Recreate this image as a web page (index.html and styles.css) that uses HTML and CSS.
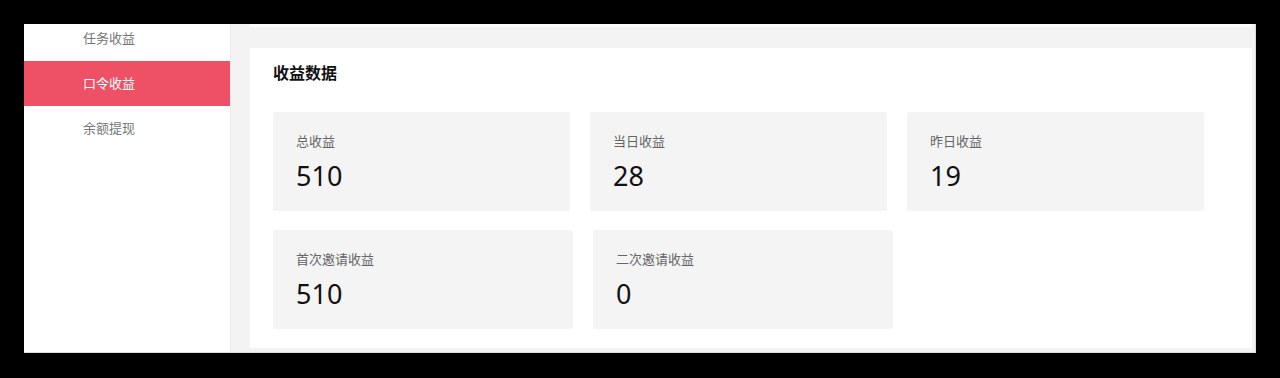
FILE: index.html
```html
<!DOCTYPE html>
<html lang="zh-CN">
<head>
  <meta charset="UTF-8">
  <title>收益数据</title>
  <link rel="stylesheet" href="styles.css">
</head>
<body>
  <div class="frame">
    <div class="sidebar">
      <ul class="menu">
        <li class="menu-item">任务收益</li>
        <li class="menu-item active">口令收益</li>
        <li class="menu-item">余额提现</li>
      </ul>
    </div>
    <div class="main">
      <div class="panel-tail"></div>
      <div class="panel">
        <div class="panel-title">收益数据</div>
        <div class="stat-row">
          <div class="stat"><div class="stat-label">总收益</div><div class="stat-num">510</div></div>
          <div class="stat"><div class="stat-label">当日收益</div><div class="stat-num">28</div></div>
          <div class="stat"><div class="stat-label">昨日收益</div><div class="stat-num">19</div></div>
        </div>
        <div class="stat-row">
          <div class="stat stat-wide"><div class="stat-label">首次邀请收益</div><div class="stat-num">510</div></div>
          <div class="stat stat-wide"><div class="stat-label">二次邀请收益</div><div class="stat-num">0</div></div>
        </div>
      </div>
    </div>
  </div>
</body>
</html>
```

FILE: styles.css
```css
* { box-sizing: border-box; }
body { margin: 0; padding: 24px; background: #000; font-family: "Noto Sans", "Noto Sans CJK SC", sans-serif; }
.frame { display: flex; width: 1232px; height: 329px; overflow: hidden; background: #f3f3f3; border-bottom: 1px solid #dcdcdc; border-right: 1px solid #dcdcdc; }
.sidebar { width: 207px; flex-shrink: 0; background: #fff; border-right: 1px solid #ececec; }
.menu { list-style: none; margin: -8px 0 0; padding: 0; }
.menu-item { height: 45px; line-height: 45px; padding-left: 59px; font-size: 13px; color: #777; }
.menu-item.active { background: #ee5066; color: #fff; }
.main { flex: 1; padding: 0 3px 0 19px; }
.panel-tail { height: 3px; background: #fcfcfc; }
.panel { margin-top: 21px; height: 300px; background: #fff; padding: 14px 23px 19px; }
.panel-title { font-size: 16px; line-height: 22px; font-weight: bold; color: #111; margin-bottom: 28px; }
.stat-row { display: flex; gap: 20px; margin-bottom: 19px; }
.stat-row:last-child { margin-bottom: 0; }
.stat { width: 297px; height: 99px; background: #f4f4f4; border-radius: 2px; padding: 20px 23px 0; }
.stat-wide { width: 300px; }
.stat-label { font-size: 13px; line-height: 18px; color: #666; margin-bottom: 9px; }
.stat-num { font-size: 27px; line-height: 34px; color: #111; }
```
